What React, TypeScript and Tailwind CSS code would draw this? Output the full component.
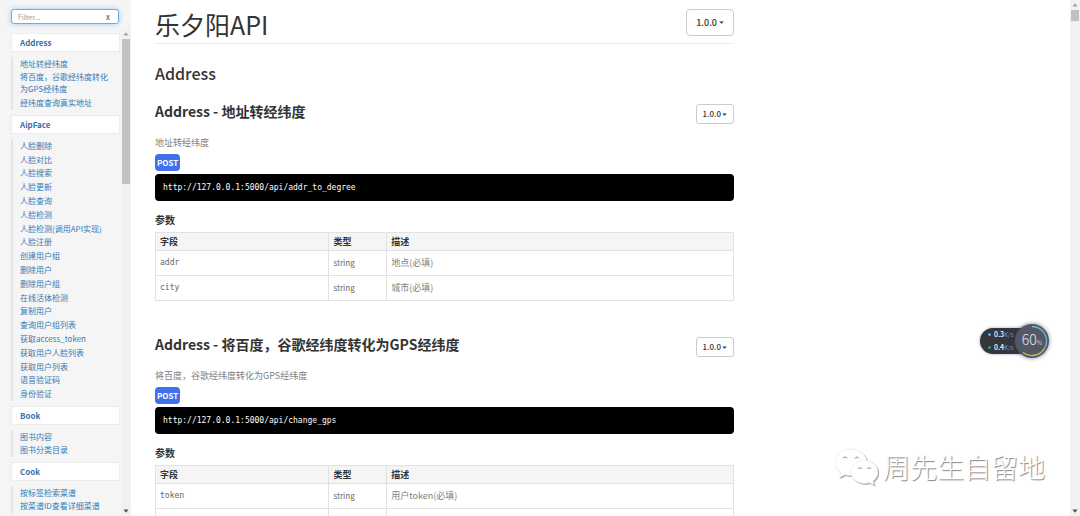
import React from "react";

type Group = { title: string; items: string[]; size: string };

const groups: Group[] = [
  {
    title: "Address",
    size: "min-h-[53px]",
    items: ["地址转经纬度", "将百度，谷歌经纬度转化为GPS经纬度", "经纬度查询真实地址"],
  },
  {
    title: "AipFace",
    size: "min-h-[262px]",
    items: [
      "人脸删除", "人脸对比", "人脸搜索", "人脸更新", "人脸查询", "人脸检测",
      "人脸检测(调用API实现)", "人脸注册", "创建用户组", "删除用户", "删除用户组",
      "在线活体检测", "复制用户", "查询用户组列表", "获取access_token",
      "获取用户人脸列表", "获取用户列表", "语音验证码", "身份验证",
    ],
  },
  { title: "Book", size: "min-h-[27px]", items: ["图书内容", "图书分类目录"] },
  { title: "Cook", size: "min-h-[27px]", items: ["按标签检索菜谱", "按菜谱ID查看详细菜谱"] },
];

type Row = { field: string; type: string; text: string };
type Endpoint = { title: string; url: string; rows: Row[] };

const endpoints: Endpoint[] = [
  {
    title: "地址转经纬度",
    url: "http://127.0.0.1:5000/api/addr_to_degree",
    rows: [
      { field: "addr", type: "string", text: "地点(必填)" },
      { field: "city", type: "string", text: "城市(必填)" },
    ],
  },
  {
    title: "将百度，谷歌经纬度转化为GPS经纬度",
    url: "http://127.0.0.1:5000/api/change_gps",
    rows: [
      { field: "token", type: "string", text: "用户token(必填)" },
      { field: "", type: "", text: "" },
    ],
  },
];

function Arrow({ up = false, faint = false }: { up?: boolean; faint?: boolean }) {
  return (
    <svg viewBox="0 0 10 10" className={faint ? "size-[10px] fill-[#a3a3a3]" : "size-[10px] fill-[#505050]"} aria-hidden="true">
      <path d={up ? "M5 3.2 7.5 6.4h-5z" : "M5 6.8 7.5 3.6h-5z"} />
    </svg>
  );
}

function Caret() {
  return (
    <svg viewBox="0 0 6 4" className="h-[3px] w-[5px] fill-current" aria-hidden="true">
      <path d="M0 .5h6L3 3.6z" />
    </svg>
  );
}

function Sidebar() {
  return (
    <aside className="flex w-[131px] shrink-0 flex-col bg-[#f5f5f5]">
      <div className="ml-[11px] mr-3 mt-[9px] flex h-[15px] items-center rounded-[3px] border border-[#66afe9] bg-white pl-[6px] pr-2 shadow-[0_0_5px_rgba(102,175,233,0.6)]">
        <input
          aria-label="Filter"
          placeholder="Filter..."
          className="min-w-0 flex-1 bg-transparent text-[7px] leading-3 text-[#555] outline-none placeholder:text-[#999]"
        />
        <button aria-label="Clear filter" className="text-[8px] leading-3 text-[#444]">x</button>
      </div>
      <div className="mt-[5px] flex min-h-0 flex-1">
        <nav className="min-w-0 flex-1 overflow-hidden pl-[11px] pr-px pt-1">
          {groups.map((g) => (
            <section key={g.title} className="mb-[5px]">
              <a href={"#" + g.title} className="block h-[19px] border border-[#ececec] bg-white pl-2 text-[8px] font-bold leading-[18px] text-[#3672ad]">
                {g.title}
              </a>
              <ul className={"mt-[5px] grid border-l-2 border-[#e4e4e4] pl-[7px] pr-2 text-[8px] leading-3 text-[#337ab7] " + g.size}>
                {g.items.map((item) => (
                  <li key={item} className="flex items-center">
                    <a href={"#" + item}>{item}</a>
                  </li>
                ))}
              </ul>
            </section>
          ))}
        </nav>
        <div className="flex w-[10px] flex-col bg-[#f1f1f1]">
          <Arrow up faint />
          <div className="mx-px h-[145px] bg-[#c1c1c1]" />
          <div className="mt-auto">
            <Arrow />
          </div>
        </div>
      </div>
    </aside>
  );
}

function ParamTable({ rows }: { rows: Row[] }) {
  return (
    <table className="w-full table-fixed border-collapse text-left text-[9px] leading-3">
      <colgroup>
        <col className="w-[30%]" />
        <col className="w-[10%]" />
        <col className="w-[60%]" />
      </colgroup>
      <thead>
        <tr className="h-[18px] bg-[#f5f5f5] text-[#333]">
          <th className="border border-[#e2e2e2] px-1 font-bold">字段</th>
          <th className="border border-[#e2e2e2] px-1 font-bold">类型</th>
          <th className="border border-[#e2e2e2] px-1 font-bold">描述</th>
        </tr>
      </thead>
      <tbody>
        {rows.map((r) => (
          <tr key={r.field} className="h-[25px] text-[#666]">
            <td className="border border-[#e2e2e2] px-1 font-['DejaVu_Sans_Mono',monospace] text-[8px]">{r.field}</td>
            <td className="border border-[#e2e2e2] px-1 text-[8px]">{r.type}</td>
            <td className="border border-[#e2e2e2] px-1 text-[#808080]">{r.text}</td>
          </tr>
        ))}
      </tbody>
    </table>
  );
}

function EndpointCard({ endpoint }: { endpoint: Endpoint }) {
  return (
    <article className="mb-9">
      <header className="flex h-5 items-center justify-between">
        <h3 className="-mt-[6px] text-[14px] font-bold leading-5 text-[#333]">Address - {endpoint.title}</h3>
        <button className="flex h-5 items-center gap-px rounded-[3px] border border-[#ccc] px-[6px] text-[8px] font-medium leading-3 text-[#333]">
          1.0.0 <Caret />
        </button>
      </header>
      <p className="mt-[13px] text-[9px] leading-3 text-[#808080]">{endpoint.title}</p>
      <span className="mt-[5px] block w-fit rounded-[4px] bg-[#4070ec] px-[2px] text-[8px] font-bold leading-[17px] text-white">POST</span>
      <pre className="mt-[3px] rounded-[4px] bg-black px-2 font-['DejaVu_Sans_Mono',monospace] text-[8px] leading-[27px] text-white">{endpoint.url}</pre>
      <h4 className="mb-[6px] mt-3 text-[10px] font-bold leading-[13px] text-[#333]">参数</h4>
      <ParamTable rows={endpoint.rows} />
    </article>
  );
}

function SpeedWidget() {
  return (
    <div className="absolute right-[31px] top-[324px] flex items-center">
      <div className="-mr-4 flex h-[26px] w-[51px] flex-col justify-center rounded-l-full bg-[#33353f] pl-2 text-[7px] font-medium leading-3 text-white shadow-[0_0_3px_rgba(60,70,90,0.5)]">
        <span className="flex items-center gap-[3px]">
          <i className="size-[3px] rounded-full bg-[#5da5d8]" />
          <span>0.3<small className="text-[6px] text-[#85878f]">K/s</small></span>
        </span>
        <span className="flex items-center gap-[3px]">
          <i className="size-[3px] rounded-full bg-[#2fa35f]" />
          <span>0.4<small className="text-[6px] text-[#85878f]">K/s</small></span>
        </span>
      </div>
      <div className="relative flex size-[34px] items-center justify-center rounded-full bg-[#545765] text-[#e5e7ec] shadow-[0_0_4px_rgba(60,70,90,0.7)]">
        <svg viewBox="0 0 34 34" className="absolute inset-0" fill="none" strokeWidth="1.3" aria-hidden="true">
          <path d="M17 2.5A14.5 14.5 0 0 1 29.5 24.3" stroke="#65bec4" />
          <path d="M29.5 24.3A14.5 14.5 0 0 1 8 28.4" stroke="#b7c94a" />
        </svg>
        <span className="text-[14px] font-light leading-4">60<small className="text-[6px]">%</small></span>
      </div>
    </div>
  );
}

function Watermark() {
  return (
    <div className="absolute bottom-[29px] right-[35px] flex items-center gap-[5px]">
      <svg viewBox="0 0 44 40" className="h-10 w-11 drop-shadow-[1px_1px_0px_#a0a0a0]" fill="#fff" stroke="#e0e0e0" strokeWidth=".5" aria-hidden="true">
        <path d="M17 2C8 2 1 8 1 15.500c0 4.500 2.400 8 6 10.500L5.500 30.500 11 27.700c2 .6 4 .9 6 .9 9 0 16-5.600 16-13.100S26 2 17 2z" />
        <path d="M30.500 13.500C23 13.500 17 18.700 17 25s6 11.500 13.500 11.500c1.700 0 3.300-.3 4.800-.8l5 2.600-1.300-4.100C42.200 32 44 28.800 44 25c0-6.300-6-11.500-13.500-11.500z" />
        <g fill="none" stroke="#909090" strokeWidth="1">
          <path d="M9 11.500a2.100 2.100 0 0 1 4 0M21 11.500a2.100 2.100 0 0 1 4 0M24.500 22a1.800 1.800 0 0 1 3.400 0M33.500 22a1.800 1.800 0 0 1 3.400 0" />
        </g>
      </svg>
      <span className="text-[27px] font-light leading-9 text-white [text-shadow:1px_1px_1px_#808080]">周先生自留地</span>
    </div>
  );
}

export default function App() {
  return (
    <div lang="zh-CN" className="relative flex h-screen overflow-hidden bg-white font-['Noto_Sans_CJK_SC',sans-serif]">
      <Sidebar />
      <main className="min-w-0 flex-1 overflow-hidden px-6">
        <div className="w-full max-w-[579px]">
          <header className="flex h-11 items-start justify-between border-b border-[#eee] pt-[9px]">
            <h1 className="text-[25px] leading-[30px] text-[#333]">乐夕阳API</h1>
            <button className="flex h-[27px] items-center gap-[2px] rounded-[4px] border border-[#ccc] px-[9px] text-[9px] font-medium leading-3 text-[#333]">
              1.0.0 <Caret />
            </button>
          </header>
          <h2 className="mb-[19px] mt-[17px] text-[16px] font-medium leading-6 text-[#333]">Address</h2>
          {endpoints.map((e) => (
            <EndpointCard key={e.url} endpoint={e} />
          ))}
        </div>
      </main>
      <div className="flex w-[10px] shrink-0 flex-col bg-[#f1f1f1]">
        <Arrow up faint />
        <div className="mx-px h-[11px] bg-[#c1c1c1]" />
        <div className="mt-auto">
          <Arrow />
        </div>
      </div>
      <SpeedWidget />
      <Watermark />
    </div>
  );
}
